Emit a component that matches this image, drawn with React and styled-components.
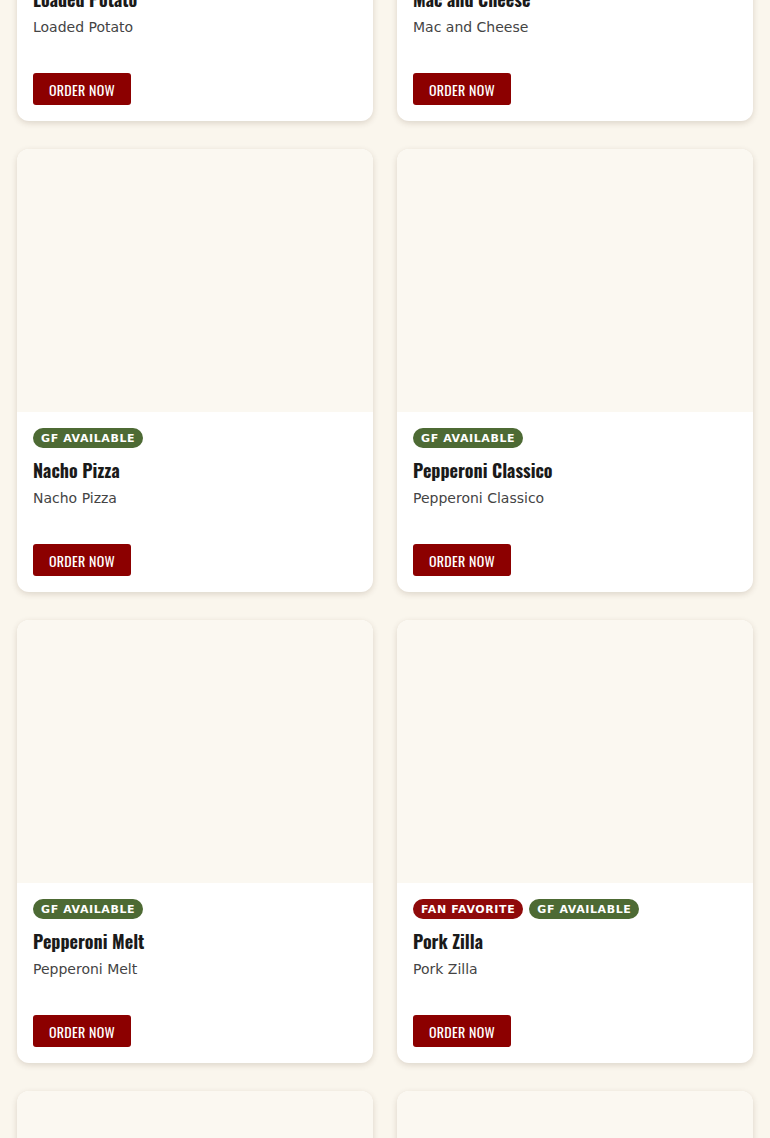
import React from 'react';
import styled, { createGlobalStyle } from 'styled-components';

const items = [
  { name: 'Loaded Potato', tags: [] },
  { name: 'Mac and Cheese', tags: [] },
  { name: 'Nacho Pizza', tags: ['gf'] },
  { name: 'Pepperoni Classico', tags: ['gf'] },
  { name: 'Pepperoni Melt', tags: ['gf'] },
  { name: 'Pork Zilla', tags: ['fan', 'gf'] },
  { name: 'Buffalo Chicken', tags: ['gf'] },
  { name: 'Veggie Supreme', tags: ['gf'] },
];

const TAGS = {
  fan: { label: 'FAN FAVORITE', color: '#8f0a0a' },
  gf: { label: 'GF AVAILABLE', color: '#4d6a34' },
};

const MenuCard = ({ item }) => (
  <Card>
    <ImageBox />
    <Body>
      {item.tags.length > 0 && (
        <Badges>
          {item.tags.map((t) => (
            <Badge key={t} $color={TAGS[t].color}>
              {TAGS[t].label}
            </Badge>
          ))}
        </Badges>
      )}
      <Title>{item.name}</Title>
      <Description>{item.name}</Description>
      <OrderButton>ORDER NOW</OrderButton>
    </Body>
  </Card>
);

export default function App() {
  return (
    <>
      <GlobalStyle />
      <Page>
        <Grid>
          {items.map((item) => (
            <MenuCard key={item.name} item={item} />
          ))}
        </Grid>
      </Page>
    </>
  );
}

const GlobalStyle = createGlobalStyle`
  html, body {
    margin: 0;
    padding: 0;
    background: #faf6ed;
    overflow: hidden;
  }
  body {
    font-family: "DejaVu Sans", Verdana, sans-serif;
  }
`;

const Page = styled.div`
  padding: 0 17px;
  height: 1138px;
  overflow: hidden;
`;

/* the list is scrolled: the first row sits partly above the window */
const Grid = styled.div`
  display: grid;
  grid-template-columns: 1fr 1fr;
  column-gap: 24px;
  row-gap: 28px;
  margin-top: -293px;
`;

const Card = styled.div`
  display: flex;
  flex-direction: column;
  background: #ffffff;
  border-radius: 12px;
  overflow: hidden;
  box-shadow: 0 2px 6px rgba(60, 40, 10, 0.16);
`;

const ImageBox = styled.div`
  height: 263px;
  background: #fbf8f1;
`;

const Body = styled.div`
  display: flex;
  flex-direction: column;
  align-items: flex-start;
  padding: 16px;
`;

const Badges = styled.div`
  display: flex;
  gap: 6px;
  margin-bottom: 9px;
`;

const Badge = styled.span`
  display: inline-flex;
  align-items: center;
  height: 20px;
  padding: 0 8px;
  border-radius: 10px;
  background: ${(p) => p.$color};
  color: #ffffff;
  font-family: "DejaVu Sans", sans-serif;
  font-weight: 700;
  font-size: 11px;
  letter-spacing: 0.6px;
`;

const Title = styled.div`
  font-family: "Oswald", "Liberation Sans Narrow", "DejaVu Sans Condensed", sans-serif;
  font-weight: 700;
  font-size: 18px;
  line-height: 26px;
  color: #1a1a1a;
`;

const Description = styled.div`
  margin-top: 5px;
  font-size: 14px;
  line-height: 20px;
  color: #444444;
`;

const OrderButton = styled.button`
  margin-top: 36px;
  height: 32px;
  width: 98px;
  border: none;
  border-radius: 3px;
  background: #8c0000;
  color: #ffffff;
  font-family: "Oswald", "Liberation Sans Narrow", "DejaVu Sans Condensed", sans-serif;
  font-weight: 400;
  font-size: 14px;
  letter-spacing: 0.3px;
  cursor: pointer;
`;
